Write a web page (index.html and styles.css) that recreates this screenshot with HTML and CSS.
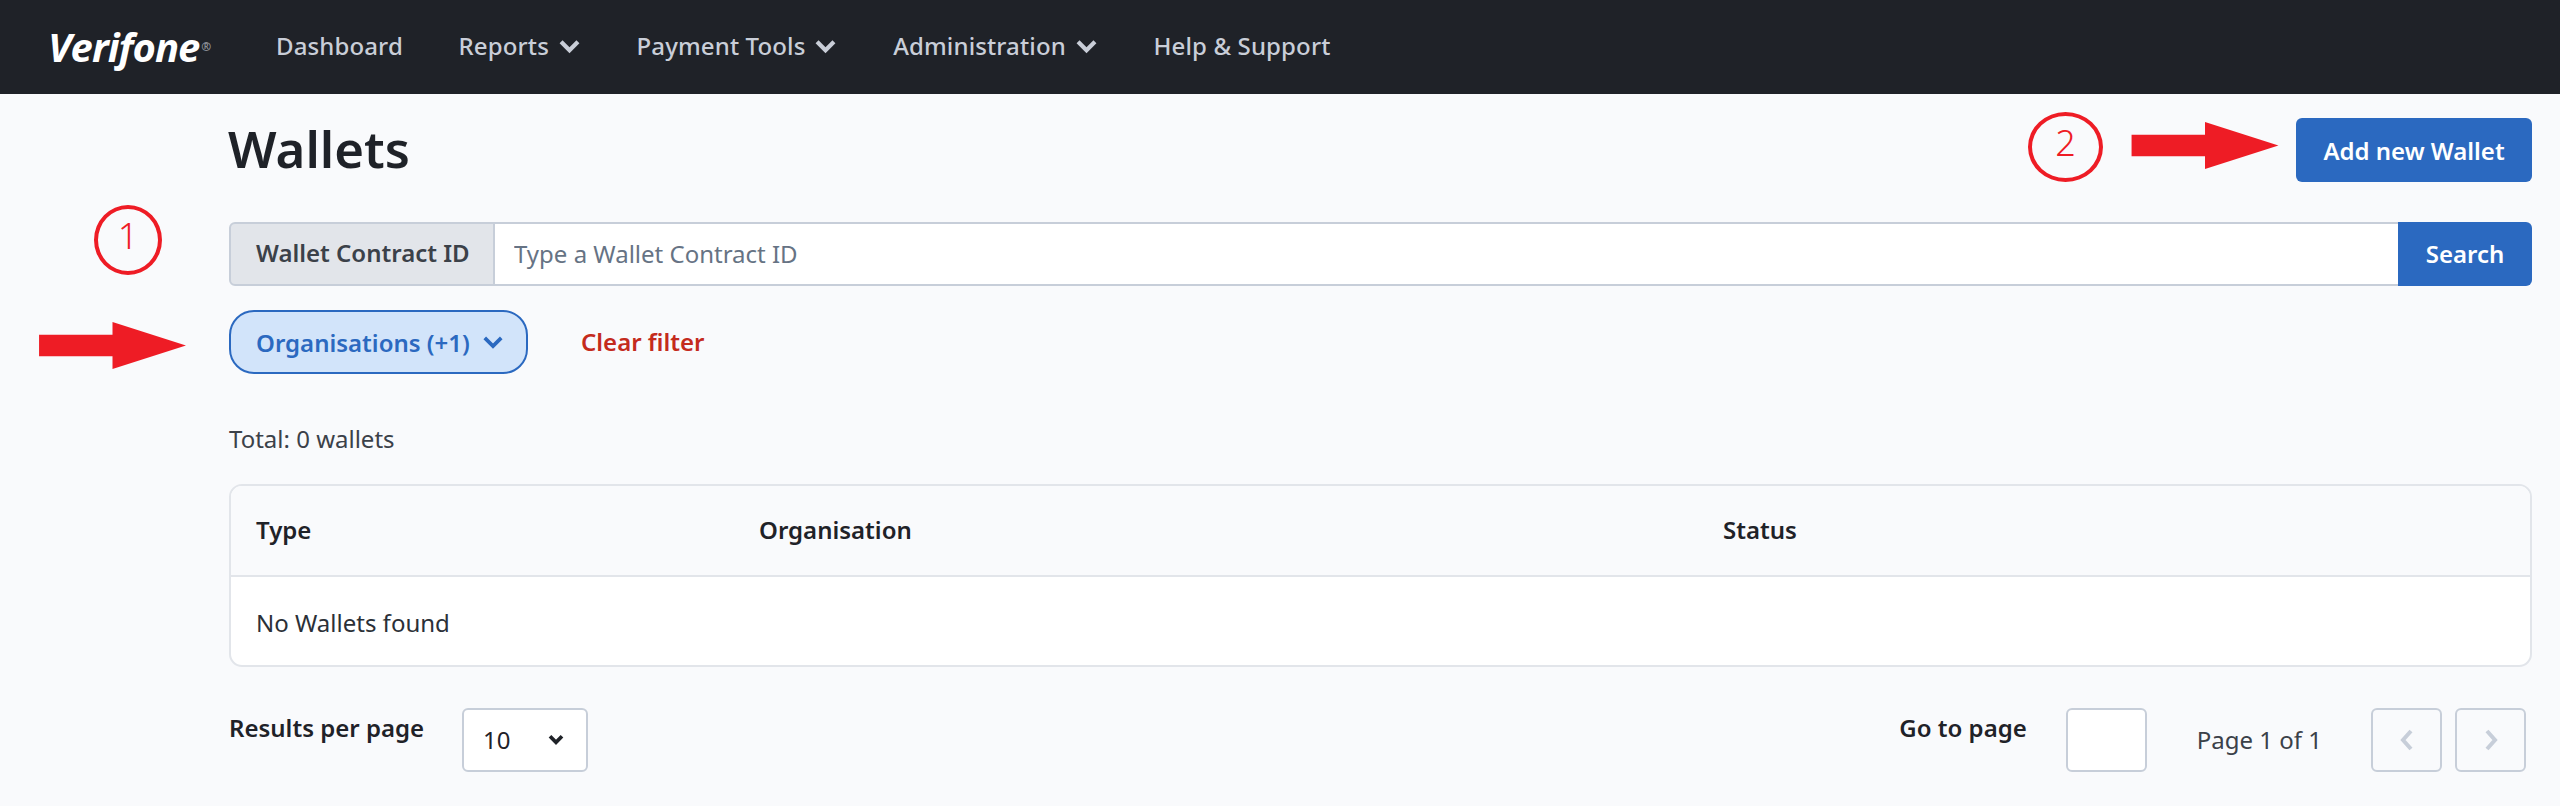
FILE: index.html
```html
<!DOCTYPE html>
<html lang="en">
<head>
<meta charset="utf-8">
<title>Wallets</title>
<link rel="stylesheet" href="styles.css">
</head>
<body>
<header class="topbar">
  <a class="logo">Verifone<sup class="reg">®</sup></a>
  <nav class="nav">
    <a class="nav-item">Dashboard</a>
    <a class="nav-item">Reports <svg class="chev" viewBox="0 0 24 16"><path d="M3 3l9 9 9-9" /></svg></a>
    <a class="nav-item">Payment Tools <svg class="chev" viewBox="0 0 24 16"><path d="M3 3l9 9 9-9" /></svg></a>
    <a class="nav-item">Administration <svg class="chev" viewBox="0 0 24 16"><path d="M3 3l9 9 9-9" /></svg></a>
    <a class="nav-item">Help &amp; Support</a>
  </nav>
</header>
<main class="content">
  <div class="title-row">
    <h1 class="title">Wallets</h1>
    <button class="btn btn-add">Add new Wallet</button>
  </div>
  <div class="search">
    <span class="search-label">Wallet Contract ID</span>
    <input class="search-input" placeholder="Type a Wallet Contract ID">
    <button class="btn btn-search">Search</button>
  </div>
  <div class="filters">
    <button class="pill">Organisations (+1) <svg class="pill-chev" viewBox="0 0 24 16"><path d="M3 3l9 9 9-9" /></svg></button>
    <a class="clear">Clear filter</a>
  </div>
  <p class="total">Total: 0 wallets</p>
  <div class="table">
    <div class="thead">
      <div class="c1">Type</div>
      <div class="c2">Organisation</div>
      <div class="c3">Status</div>
    </div>
    <div class="tbody">No Wallets found</div>
  </div>
  <div class="pager">
    <div class="pager-left">
      <span class="pager-label">Results per page</span>
      <div class="select"><span>10</span><svg class="select-chev" viewBox="0 0 24 16"><path d="M4 3l8 8 8-8" /></svg></div>
    </div>
    <div class="pager-right">
      <span class="pager-label">Go to page</span>
      <input class="page-input">
      <span class="page-of">Page 1 of 1</span>
      <div class="page-btns">
        <button class="page-btn"><svg class="page-ico" viewBox="0 0 16 24"><path d="M12 3l-8 9 8 9" /></svg></button>
        <button class="page-btn"><svg class="page-ico" viewBox="0 0 16 24"><path d="M4 3l8 9-8 9" /></svg></button>
      </div>
    </div>
  </div>
</main>

<div class="badge badge-1">1</div>
<div class="badge badge-2">2</div>
<svg class="arrow arrow-1" viewBox="0 0 150 48"><path d="M0 13H75V0L150 24 75 48V35H0Z" /></svg>
<svg class="arrow arrow-2" viewBox="0 0 150 48"><path d="M0 13H75V0L150 24 75 48V35H0Z" /></svg>
</body>
</html>
```
FILE: styles.css
```css
* { box-sizing: border-box; }
html, body { margin: 0; padding: 0; }
body {
  position: relative;
  min-height: 806px;
  background: #f9fafc;
  color: #1f2228;
  font-family: "Noto Sans", "Open Sans", sans-serif;
  font-size: 24px;
  line-height: 1.5;
  overflow: hidden;
}
.topbar {
  height: 94px;
  background: #1f2228;
  display: flex;
  align-items: center;
  padding-left: 48px;
}
.logo {
  width: 228px;
  color: #fff;
  font-family: "Open Sans", "Noto Sans", sans-serif;
  font-size: 40px;
  font-weight: 700;
  font-style: italic;
  letter-spacing: -1px;
  line-height: 1;
  display: flex;
  align-items: center;
}
.reg { font-size: 12px; font-style: normal; color: #8b8f96; margin-left: 2px; letter-spacing: 0; }
.nav { display: flex; gap: 55.7px; margin-top: -2px; }
.nav-item {
  color: #c9ced8;
  font-size: 24px;
  font-weight: 500;
  letter-spacing: 0.12px;
  display: flex;
  align-items: center;
  gap: 9px;
}
.chev { width: 23px; height: 15px; fill: none; stroke: #c9ced8; stroke-width: 4.5; }
.content { padding: 0 28px 0 229px; }
.title-row {
  display: flex;
  justify-content: space-between;
  align-items: center;
  height: 64px;
  margin-top: 24px;
}
.title { margin: -2px 0 0 -1px; font-size: 51px; font-weight: 600; line-height: 1.2; color: #1f2228; }
.btn {
  border: 0;
  background: #2b69c0;
  color: #fff;
  font: 600 24px "Noto Sans", sans-serif;
  height: 64px;
  padding: 0 27px;
}
.btn-add { width: 236px; border-radius: 6px; }
.search { display: flex; height: 64px; margin-top: 40px; }
.search-label {
  display: flex;
  align-items: center;
  width: 266px;
  padding: 0 0 2px 25px;
  font-weight: 600;
  color: #3b4149;
  background: #e2e5ea;
  border: 2px solid #c7ced9;
  border-radius: 6px 0 0 6px;
}
.search-input {
  flex: 1;
  min-width: 0;
  height: 64px;
  padding: 0 0 2px 19px;
  border: 2px solid #c7ced9;
  border-width: 2px 0;
  background: #fff;
  outline: 0;
  font: 400 24px "Noto Sans", sans-serif;
}
.search-input::placeholder { color: #667384; opacity: 1; }
.btn-search { width: 134px; border-radius: 0 6px 6px 0; padding: 0 0 2px; }
.filters { display: flex; align-items: center; gap: 53px; margin-top: 24px; }
.pill {
  height: 64px;
  width: 299px;
  padding: 0 22px 0 25px;
  border: 2px solid #2b69c0;
  border-radius: 25px;
  background: #d2e4fa;
  color: #2b69c0;
  font: 600 24px "Noto Sans", sans-serif;
  display: flex;
  align-items: center;
  justify-content: space-between;
}
.pill-chev { width: 22px; height: 15px; fill: none; stroke: #2b69c0; stroke-width: 4; }
.clear { color: #c42b1c; font-weight: 600; }
.total { margin: 48px 0 0; height: 34px; line-height: 34px; color: #3b4149; }
.table {
  margin-top: 28px;
  height: 183px;
  border: 2px solid #e2e5ea;
  border-radius: 13px;
  overflow: hidden;
  background: #fff;
}
.thead {
  display: flex;
  align-items: center;
  height: 91px;
  padding: 0 0 2px 25px;
  background: #f9fafc;
  border-bottom: 2px solid #e2e5ea;
  font-weight: 600;
}
.c1 { width: 503px; }
.c2 { width: 964px; }
.tbody { height: 90px; padding: 2px 0 0 25px; display: flex; align-items: center; color: #2b3037; }
.pager { display: flex; justify-content: space-between; margin-top: 41px; padding-right: 6px; }
.pager-left, .pager-right { display: flex; align-items: flex-start; }
.pager-label { font-weight: 600; line-height: 40px; }
.select {
  margin-left: 38px;
  width: 126px;
  height: 64px;
  padding: 0 21px 0 19px;
  background: #fff;
  border: 2px solid #c7ced9;
  border-radius: 6px;
  display: flex;
  align-items: center;
  justify-content: space-between;
}
.select-chev { width: 18px; height: 12px; fill: none; stroke: #1f2228; stroke-width: 5; }
.page-input {
  width: 81px;
  height: 64px;
  margin-left: 39px;
  background: #fff;
  border: 2px solid #c7ced9;
  border-radius: 6px;
  outline: 0;
}
.page-of { margin-left: 50px; line-height: 64px; color: #3b4149; }
.page-btns { display: flex; gap: 13px; margin-left: 49px; }
.page-btn {
  width: 71px;
  height: 64px;
  padding: 0;
  background: transparent;
  border: 2px solid #c7ced9;
  border-radius: 6px;
  display: flex;
  align-items: center;
  justify-content: center;
}
.page-ico { width: 16px; height: 24px; fill: none; stroke: #c7ced9; stroke-width: 4; }
.badge {
  position: absolute;
  display: flex;
  align-items: center;
  justify-content: center;
  border: 4px solid #ee1c25;
  border-radius: 50%;
  color: #ee1c25;
  font-size: 36px;
  font-weight: 300;
  line-height: 1;
  padding-bottom: 8px;
}
.badge-1 { left: 94px; top: 205px; width: 68px; height: 70px; }
.badge-2 { left: 2028px; top: 112px; width: 75px; height: 70px; }
.arrow { position: absolute; fill: #ee1c25; }
.arrow-1 { left: 37px; top: 322px; width: 151px; height: 47px; }
.arrow-2 { left: 2131px; top: 122px; width: 148px; height: 47px; }
```
